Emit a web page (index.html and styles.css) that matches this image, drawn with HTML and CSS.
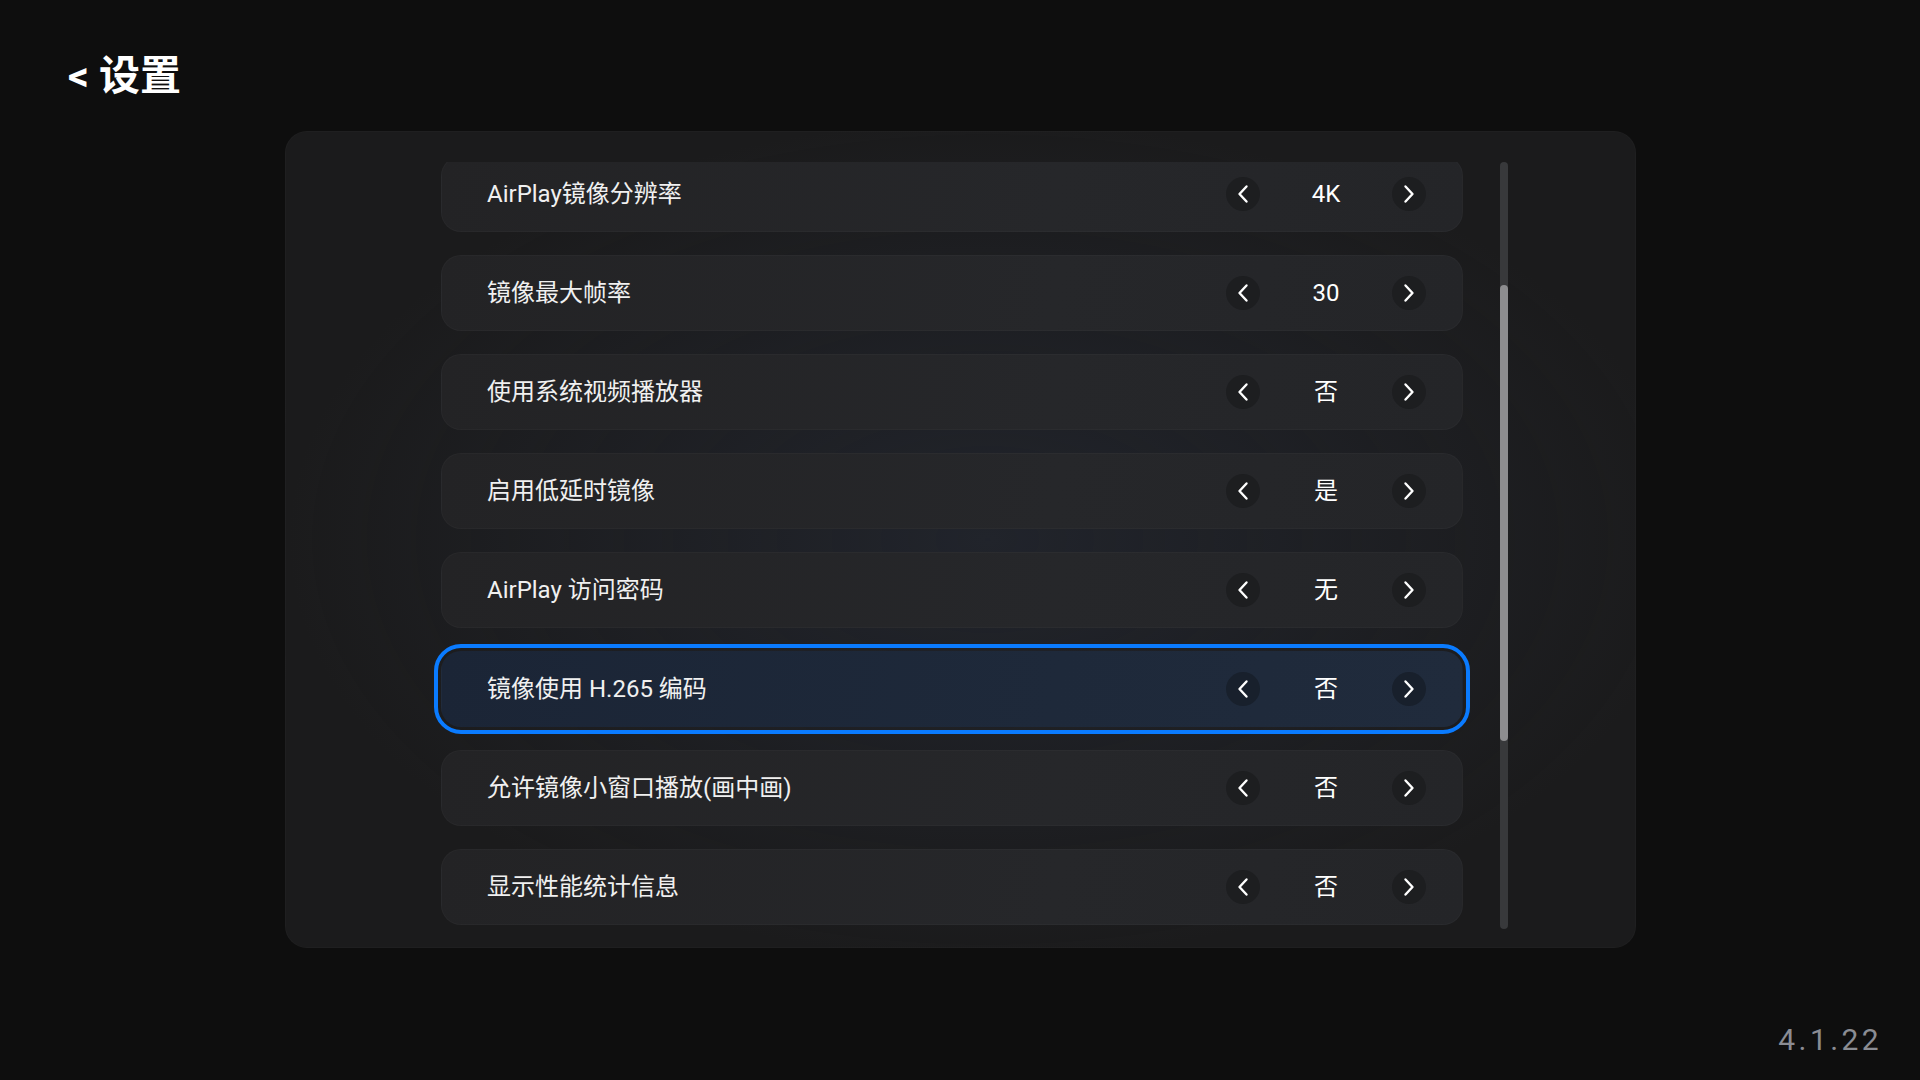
FILE: index.html
```html
<!DOCTYPE html>
<html lang="zh-CN">
<head>
<meta charset="utf-8">
<title>设置</title>
<link rel="stylesheet" href="styles.css">
</head>
<body>
<div class="screen">
  <header class="header"><span class="back">&lt;</span> 设置</header>
  <main class="panel">
    <div class="scroll">
      <ul class="list">
        <li class="row"><span class="label">AirPlay镜像分辨率</span><div class="ctrl"><span class="btn"><svg viewBox="0 0 34 34"><path d="M20.5 9.5 L13.5 17 L20.5 24.5"/></svg></span><span class="val">4K</span><span class="btn"><svg viewBox="0 0 34 34"><path d="M13.5 9.5 L20.5 17 L13.5 24.5"/></svg></span></div></li>
        <li class="row"><span class="label">镜像最大帧率</span><div class="ctrl"><span class="btn"><svg viewBox="0 0 34 34"><path d="M20.5 9.5 L13.5 17 L20.5 24.5"/></svg></span><span class="val">30</span><span class="btn"><svg viewBox="0 0 34 34"><path d="M13.5 9.5 L20.5 17 L13.5 24.5"/></svg></span></div></li>
        <li class="row"><span class="label">使用系统视频播放器</span><div class="ctrl"><span class="btn"><svg viewBox="0 0 34 34"><path d="M20.5 9.5 L13.5 17 L20.5 24.5"/></svg></span><span class="val">否</span><span class="btn"><svg viewBox="0 0 34 34"><path d="M13.5 9.5 L20.5 17 L13.5 24.5"/></svg></span></div></li>
        <li class="row"><span class="label">启用低延时镜像</span><div class="ctrl"><span class="btn"><svg viewBox="0 0 34 34"><path d="M20.5 9.5 L13.5 17 L20.5 24.5"/></svg></span><span class="val">是</span><span class="btn"><svg viewBox="0 0 34 34"><path d="M13.5 9.5 L20.5 17 L13.5 24.5"/></svg></span></div></li>
        <li class="row"><span class="label">AirPlay 访问密码</span><div class="ctrl"><span class="btn"><svg viewBox="0 0 34 34"><path d="M20.5 9.5 L13.5 17 L20.5 24.5"/></svg></span><span class="val">无</span><span class="btn"><svg viewBox="0 0 34 34"><path d="M13.5 9.5 L20.5 17 L13.5 24.5"/></svg></span></div></li>
        <li class="row focused"><span class="label">镜像使用 H.265 编码</span><div class="ctrl"><span class="btn"><svg viewBox="0 0 34 34"><path d="M20.5 9.5 L13.5 17 L20.5 24.5"/></svg></span><span class="val">否</span><span class="btn"><svg viewBox="0 0 34 34"><path d="M13.5 9.5 L20.5 17 L13.5 24.5"/></svg></span></div></li>
        <li class="row"><span class="label">允许镜像小窗口播放(画中画)</span><div class="ctrl"><span class="btn"><svg viewBox="0 0 34 34"><path d="M20.5 9.5 L13.5 17 L20.5 24.5"/></svg></span><span class="val">否</span><span class="btn"><svg viewBox="0 0 34 34"><path d="M13.5 9.5 L20.5 17 L13.5 24.5"/></svg></span></div></li>
        <li class="row"><span class="label">显示性能统计信息</span><div class="ctrl"><span class="btn"><svg viewBox="0 0 34 34"><path d="M20.5 9.5 L13.5 17 L20.5 24.5"/></svg></span><span class="val">否</span><span class="btn"><svg viewBox="0 0 34 34"><path d="M13.5 9.5 L20.5 17 L13.5 24.5"/></svg></span></div></li>
      </ul>
    </div>
    <div class="scrollbar"><div class="thumb"></div></div>
  </main>
  <footer class="version">4.1.22</footer>
</div>
</body>
</html>
```

FILE: styles.css
```css
* { box-sizing: border-box; }
html, body { margin: 0; padding: 0; }
body {
  width: 1920px;
  height: 1080px;
  overflow: hidden;
  background: #0e0e0e;
  font-family: Roboto, "Noto Sans CJK SC", sans-serif;
  color: #f2f2f2;
}
.screen {
  display: flex;
  flex-direction: column;
  width: 1920px;
  height: 1080px;
}
.header {
  height: 131px;
  padding: 51px 0 0 68px;
  font-size: 41px;
  line-height: 50px;
  font-weight: 700;
  color: #ffffff;
}
.back { font-weight: 700; }
.panel {
  margin-left: 285px;
  width: 1351px;
  height: 817px;
  border-radius: 22px;
  background:
    radial-gradient(ellipse 700px 420px at 52% 50%, rgba(38, 44, 58, 0.5), rgba(38, 44, 58, 0) 100%),
    #1b1b1c;
  border: 1px solid rgba(255, 255, 255, 0.02);
  display: flex;
  align-items: flex-start;
  padding: 30px 0 0 155px;
  gap: 37px;
}
.scroll {
  width: 1022px;
  height: 767px;
  clip-path: inset(0 -20px 0 -20px);
}
.list {
  list-style: none;
  margin: -6px 0 0 0;
  padding: 0;
  display: flex;
  flex-direction: column;
  gap: 23px;
}
.row {
  height: 76px;
  border-radius: 20px;
  background: linear-gradient(100deg, #232325 0%, #26272a 60%, #242528 100%);
  border: 1px solid rgba(255, 255, 255, 0.025);
  display: flex;
  align-items: center;
  padding-left: 45px;
}
.label {
  font-size: 24px;
  line-height: 30px;
  font-weight: 400;
  color: #f0f0f0;
}
.ctrl {
  margin-left: auto;
  padding-right: 36px;
  display: flex;
  align-items: center;
}
.btn {
  width: 34px;
  height: 34px;
  border-radius: 50%;
  background: #1d1e20;
  display: flex;
}
.btn svg {
  width: 34px;
  height: 34px;
  fill: none;
  stroke: #ffffff;
  stroke-width: 2.4;
  stroke-linecap: round;
  stroke-linejoin: round;
}
.val {
  width: 132px;
  text-align: center;
  font-size: 24px;
  line-height: 30px;
  color: #ffffff;
}
.row.focused {
  background: linear-gradient(100deg, #1b2536 0%, #1e293a 60%, #202b3c 100%);
  border-color: transparent;
  outline: 4px solid #0a7bff;
  outline-offset: 3px;
}
.row.focused .btn { background: #18202c; }
.scrollbar {
  width: 8px;
  height: 767px;
  border-radius: 4px;
  background: #38393b;
  padding-top: 123px;
}
.thumb {
  width: 8px;
  height: 456px;
  border-radius: 4px;
  background: #8d8d8f;
}
.version {
  margin-top: 74px;
  padding-right: 38px;
  text-align: right;
  font-size: 30px;
  line-height: 36px;
  letter-spacing: 3.4px;
  color: #8a8c93;
}
```
